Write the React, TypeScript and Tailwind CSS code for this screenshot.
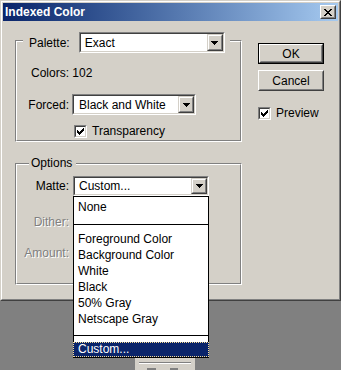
import React from 'react';

function Arrow() {
  return (
    <svg width="7" height="4" viewBox="0 0 7 4" shapeRendering="crispEdges">
      <rect x="0" y="0" width="7" height="1" fill="#000" />
      <rect x="1" y="1" width="5" height="1" fill="#000" />
      <rect x="2" y="2" width="3" height="1" fill="#000" />
      <rect x="3" y="3" width="1" height="1" fill="#000" />
    </svg>
  );
}

function Combo({ value, className, textClass }: { value: string; className: string; textClass: string }) {
  return (
    <div className={`relative flex border border-t-[#808080] border-l-[#808080] border-r-white border-b-white ${className}`}>
      <div className="flex flex-1 items-stretch border border-t-[#404040] border-l-[#404040] border-r-[#d4d0c8] border-b-[#d4d0c8] bg-white">
        <span className={`flex flex-1 items-center ${textClass}`}>{value}</span>
        <div className="flex w-[16px] border border-t-[#d4d0c8] border-l-[#d4d0c8] border-r-[#404040] border-b-[#404040]">
          <div className="flex flex-1 items-center justify-center border border-t-white border-l-white border-r-[#808080] border-b-[#808080] bg-[#d4d0c8]">
            <Arrow />
          </div>
        </div>
      </div>
    </div>
  );
}

function CheckBox() {
  return (
    <div className="h-[13px] w-[13px] border border-t-[#808080] border-l-[#808080] border-r-white border-b-white">
      <div className="flex h-full w-full items-center justify-center border border-t-[#404040] border-l-[#404040] border-r-[#d4d0c8] border-b-[#d4d0c8] bg-white">
        <svg width="7" height="7" viewBox="0 0 7 7" shapeRendering="crispEdges">
          <rect x="0" y="2" width="1" height="3" fill="#000" />
          <rect x="1" y="3" width="1" height="3" fill="#000" />
          <rect x="2" y="4" width="1" height="3" fill="#000" />
          <rect x="3" y="3" width="1" height="3" fill="#000" />
          <rect x="4" y="2" width="1" height="3" fill="#000" />
          <rect x="5" y="1" width="1" height="3" fill="#000" />
          <rect x="6" y="0" width="1" height="3" fill="#000" />
        </svg>
      </div>
    </div>
  );
}

function Frame({ className, children }: { className: string; children: React.ReactNode }) {
  // etched group box
  return (
    <div className={`relative border border-t-[#808080] border-l-[#808080] border-r-white border-b-white ${className}`}>
      <div className="flex h-full flex-col border border-t-white border-l-white border-r-[#808080] border-b-[#808080]">
        {children}
      </div>
    </div>
  );
}

const disabled = 'text-[#808080] [text-shadow:1px_1px_0_#fff]';

export default function App() {
  const colorItems = ['Foreground Color', 'Background Color', 'White', 'Black', '50% Gray', 'Netscape Gray'];

  return (
    <div className="h-[370px] w-[341px] overflow-hidden bg-[#808080] font-['Liberation_Sans',Arial,sans-serif] text-[12px] leading-[16px] text-black">
      {/* dialog window */}
      <div className="h-[301px] w-[341px] border border-t-[#d4d0c8] border-l-[#d4d0c8] border-r-[#404040] border-b-[#404040]">
        <div className="flex h-full flex-col border border-t-white border-l-white border-r-[#808080] border-b-[#808080] bg-[#d4d0c8] p-[1px]">
          {/* title bar */}
          <div className="flex h-[18px] items-center justify-between bg-linear-to-r from-[#0a246a] to-[#a6caf0] pl-[2px] pr-[2px]">
            <span className="text-[12px] font-bold text-white">Indexed Color</span>
            <div className="flex h-[14px] w-[16px] border border-t-white border-l-white border-r-[#404040] border-b-[#404040]">
              <div className="flex flex-1 items-center justify-center border border-t-[#d4d0c8] border-l-[#d4d0c8] border-r-[#808080] border-b-[#808080] bg-[#d4d0c8]">
                <svg width="8" height="7" viewBox="0 0 8 7" shapeRendering="crispEdges">
                  <path d="M0 0h2v1H0zM6 0h2v1H6zM1 1h2v1H1zM5 1h2v1H5zM2 2h4v1H2zM3 3h2v1H3zM2 4h4v1H2zM1 5h2v1H1zM5 5h2v1H5zM0 6h2v1H0zM6 6h2v1H6z" fill="#000" />
                </svg>
              </div>
            </div>
          </div>

          <div className="flex flex-1">
            {/* left column */}
            <div className="flex flex-col pl-[12px] pt-[19px]">
              <Frame className="h-[102px] w-[227px]">
                <div className="absolute left-[7px] top-[-9px] flex items-center bg-[#d4d0c8] pl-[6px] pr-[5px]">
                  <span>Palette:</span>
                  <Combo value="Exact" className="ml-[9px] h-[21px] w-[146px]" textClass="pl-[4px]" />
                </div>
                <div className="mt-[23px] pl-[14px]">Colors: 102</div>
                <div className="mt-[13px] flex items-center">
                  <span className="w-[52px] text-right">Forced:</span>
                  <Combo value="Black and White" className="ml-[3px] h-[21px] w-[124px]" textClass="pl-[5px]" />
                </div>
                <div className="mt-[8px] flex items-center pl-[57px]">
                  <CheckBox />
                  <span className="ml-[5px]">Transparency</span>
                </div>
              </Frame>

              <Frame className="mt-[21px] h-[122px] w-[227px]">
                <div className="absolute left-[13px] top-[-9px] bg-[#d4d0c8] pl-[2px] pr-[4px]">Options</div>
                <div className="mt-[11px] flex items-center">
                  <span className="w-[52px] text-right">Matte:</span>
                  <div className="relative ml-[4px]">
                    <Combo value="Custom..." className="h-[20px] w-[136px]" textClass="pl-[4px]" />
                    {/* open dropdown list */}
                    <div className="absolute left-0 top-full z-10 flex w-[136px] flex-col border border-black bg-white pt-[2px]">
                      <div className="h-[16px] pl-[4px]">None</div>
                      <div className="pt-[9px] pb-[6px]">
                        <div className="h-[1px] bg-black" />
                      </div>
                      {colorItems.map((item) => (
                        <div key={item} className="h-[16px] pl-[4px]">
                          {item}
                        </div>
                      ))}
                      <div className="pt-[8px] pb-[6px]">
                        <div className="h-[1px] bg-black" />
                      </div>
                      <div className="-mx-[1px] h-[15px] border border-dotted border-[#f5db95] bg-[#0a246a] pl-[4px] leading-[13px] text-white">
                        Custom...
                      </div>
                    </div>
                  </div>
                </div>
                <div className={`mt-[18px] w-[52px] text-right ${disabled}`}>Dither:</div>
                <div className={`mt-[15px] w-[52px] text-right ${disabled}`}>Amount:</div>
              </Frame>
            </div>

            {/* right column */}
            <div className="ml-[16px] flex flex-col pt-[22px]">
              <div className="flex h-[21px] w-[66px] border border-black">
                <div className="flex flex-1 border border-t-white border-l-white border-r-[#404040] border-b-[#404040]">
                  <div className="flex flex-1 items-center justify-center border border-t-[#d4d0c8] border-l-[#d4d0c8] border-r-[#808080] border-b-[#808080]">
                    OK
                  </div>
                </div>
              </div>
              <div className="mt-[6px] flex h-[21px] w-[66px] border border-t-white border-l-white border-r-[#404040] border-b-[#404040]">
                <div className="flex flex-1 items-center justify-center border border-t-[#d4d0c8] border-l-[#d4d0c8] border-r-[#808080] border-b-[#808080]">
                  Cancel
                </div>
              </div>
              <div className="mt-[14px] flex items-center">
                <CheckBox />
                <span className="ml-[5px]">Preview</span>
              </div>
            </div>
          </div>
        </div>
      </div>

      {/* partly hidden window below */}
      <div className="ml-[135px] mt-[56px] flex h-[13px] w-[62px] flex-col border-r-2 border-[#808080] bg-[#d4d0c8]">
        <div className="mx-[4px] mt-[5px] h-[2px] border-t border-t-[#808080] border-b border-b-white" />
        <div className="mt-[4px] flex gap-[14px] pl-[12px]">
          <div className="h-[3px] w-[9px] bg-[#808080]" />
          <div className="h-[3px] w-[8px] bg-[#808080]" />
        </div>
      </div>
    </div>
  );
}
